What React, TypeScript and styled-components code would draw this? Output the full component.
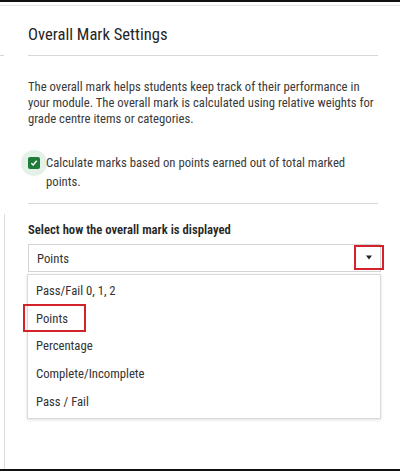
import styled, { createGlobalStyle } from 'styled-components';

const GlobalStyle = createGlobalStyle`
  html, body {
    margin: 0;
    padding: 0;
    background: #fff;
  }
  body {
    font-family: Roboto, "Open Sans", "Liberation Sans", sans-serif;
    font-stretch: 87.5%;
    color: #333;
  }
`;

const Frame = styled.div`
  width: 400px;
  height: 471px;
  box-sizing: border-box;
  border-top: 2px solid #111;
  border-bottom: 2px solid #111;
  display: flex;
  flex-direction: column;
  overflow: hidden;
`;

const TopRule = styled.div`
  margin-top: 3px;
  height: 1px;
  background: #e4e4e4;
`;

const HeaderRow = styled.div`
  display: flex;
  align-items: flex-end;
  gap: 24px;
`;

const Stub = styled.div`
  width: 4px;
  height: 1px;
  background: #d8d8d8;
`;

const Title = styled.h2`
  flex: 1;
  margin: 0 22px 0 0;
  padding: 18px 0 10px;
  font-size: 16.6px;
  line-height: 21px;
  font-weight: 400;
  color: #262626;
  border-bottom: 1px solid #d8d8d8;
`;

const Body = styled.div`
  padding: 23px 22px 0 28px;
`;

const Intro = styled.p`
  margin: 0;
  font-size: 12.7px;
  line-height: 16px;
  color: #3a3a3a;
`;

const CheckRow = styled.label`
  display: flex;
  align-items: flex-start;
  gap: 6px;
  margin-top: 26px;
  padding-bottom: 12px;
  border-bottom: 1px solid #d8d8d8;
  font-size: 12.7px;
  line-height: 19px;
  color: #3a3a3a;
`;

const CheckHalo = styled.span`
  flex: none;
  width: 26px;
  height: 26px;
  margin: -3px -7px 0;
  border-radius: 50%;
  background: #e4f1e7;
  display: flex;
  align-items: center;
  justify-content: center;
`;

const CheckBox = styled.span`
  width: 12px;
  height: 12px;
  border-radius: 2px;
  background: #1e7b3a;
  display: flex;
  align-items: center;
  justify-content: center;
`;

const Lower = styled.div`
  margin: 10px 0 0 4px;
  flex: 1;
  border-left: 1px solid #dcdcdc;
  padding: 8px 19px 0 23px;
`;

const FieldLabel = styled.div`
  font-size: 12.7px;
  font-weight: 600;
  color: #262626;
  line-height: 16px;
`;

const SelectBox = styled.div`
  position: relative;
  margin-top: 6px;
  height: 26px;
  border: 1px solid #d4d4d4;
  display: flex;
  align-items: center;
  padding-left: 8px;
  font-size: 12.7px;
  color: #333;
`;

const ArrowMark = styled.span`
  position: absolute;
  right: -4px;
  top: 0;
  width: 26px;
  height: 21px;
  border: 2.5px solid #d3222a;
  display: flex;
  align-items: center;
  justify-content: center;
`;

const Menu = styled.ul`
  list-style: none;
  margin: 2px 0 0 -1px;
  padding: 2px 0 3px;
  border: 1px solid #dadada;
  box-shadow: 0 1px 3px rgba(0, 0, 0, 0.12);
`;

const Item = styled.li<{ $marked?: boolean }>`
  position: relative;
  height: 27.6px;
  display: flex;
  align-items: center;
  padding-left: 8px;
  font-size: 12.7px;
  color: #333;

  ${({ $marked }) =>
    $marked &&
    `
    &::after {
      content: '';
      position: absolute;
      left: -5px;
      top: -1px;
      width: 59px;
      height: 24px;
      border: 2.5px solid #d3222a;
    }
  `}
`;

const options = ['Pass/Fail 0, 1, 2', 'Points', 'Percentage', 'Complete/Incomplete', 'Pass / Fail'];

export default function App() {
  return (
    <>
      <GlobalStyle />
      <Frame>
        <TopRule />
        <HeaderRow>
          <Stub />
          <Title>Overall Mark Settings</Title>
        </HeaderRow>
        <Body>
          <Intro>
            The overall mark helps students keep track of their performance in your module. The
            overall mark is calculated using relative weights for grade centre items or categories.
          </Intro>
          <CheckRow>
            <CheckHalo>
              <CheckBox>
                <svg width="8" height="8" viewBox="0 0 8 8">
                  <path d="M1.3 4.2 L3.2 6 L6.7 1.8" fill="none" stroke="#fff" strokeWidth="1.4" />
                </svg>
              </CheckBox>
            </CheckHalo>
            <span>Calculate marks based on points earned out of total marked points.</span>
          </CheckRow>
        </Body>
        <Lower>
          <FieldLabel>Select how the overall mark is displayed</FieldLabel>
          <SelectBox>
            Points
            <ArrowMark>
              <svg width="8" height="5" viewBox="0 0 8 5">
                <path d="M1 0.5 L7 0.5 L4 4.5 Z" fill="#222" />
              </svg>
            </ArrowMark>
          </SelectBox>
          <Menu>
            {options.map((o) => (
              <Item key={o} $marked={o === 'Points'}>
                {o}
              </Item>
            ))}
          </Menu>
        </Lower>
      </Frame>
    </>
  );
}
